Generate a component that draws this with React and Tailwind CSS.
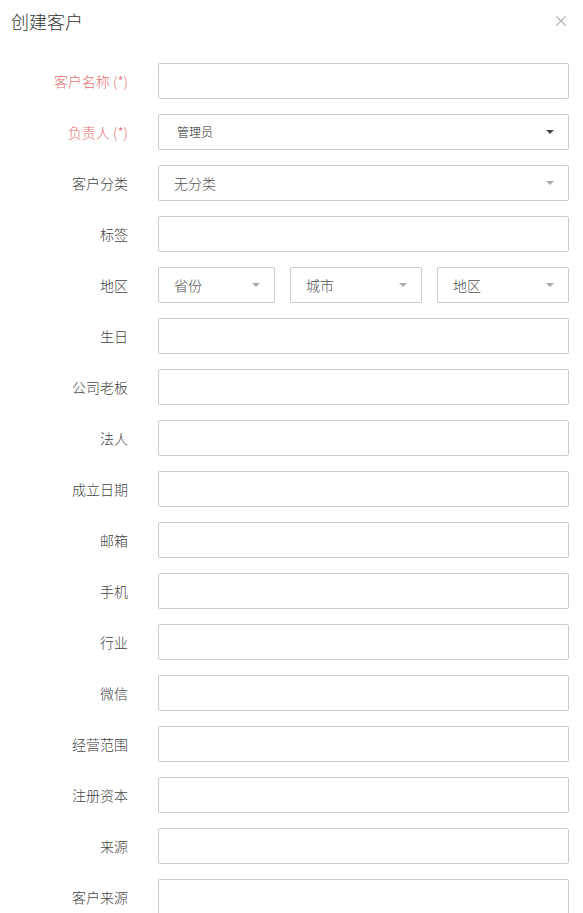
import React from 'react'

const font = { fontFamily: '"Noto Sans CJK SC", "Noto Sans", sans-serif' }

const Caret = ({ dark }) => (
    <svg width="8" height="4" viewBox="0 0 8 4" className="shrink-0">
        <path d="M0 0h8L4 4z" fill={dark ? '#444' : '#aaa'} />
    </svg>
)

const Select = ({ value, small, dark, className = '' }) => (
    <div className={`flex h-[36px] items-center justify-between rounded-[2px] border border-[#cccccc] bg-white pl-[15px] pr-[14px] ${className}`}>
        <span className={small ? 'pl-[3px] text-[12px] font-light text-[#222]' : 'text-[14px] font-light text-[#555]'}>{value}</span>
        <Caret dark={dark} />
    </div>
)

const Input = () => (
    <div className="h-[36px] flex-1 rounded-[2px] border border-[#cccccc] bg-white" />
)

const Row = ({ label, required, children }) => (
    <div className="flex items-center gap-[30px]">
        <label className={`w-[128px] shrink-0 text-right text-[14px] font-light ${required ? 'text-[#e36f6f]' : 'text-[#444]'}`}>
            {label}
        </label>
        <div className="flex flex-1 gap-[15px]">{children}</div>
    </div>
)

const plain = ['标签']
const rest = ['生日', '公司老板', '法人', '成立日期', '邮箱', '手机', '行业', '微信', '经营范围', '注册资本', '来源', '客户来源']

export default function App() {
    return (
        <div className="h-[913px] w-[583px] overflow-hidden bg-white pl-[11px] pr-[14px]" style={font}>
            <div className="flex items-center justify-between pt-[9px]">
                <h1 className="text-[18px] font-light leading-[24px] text-[#333]">创建客户</h1>
                <svg width="10" height="10" viewBox="0 0 10 10" className="mr-[3px]">
                    <path d="M0.5 0.5l9 9M9.5 0.5l-9 9" stroke="#b5b5b5" strokeWidth="1.3" />
                </svg>
            </div>

            <form className="ml-[-11px] mt-[30px] flex flex-col gap-[15px]">
                <Row label="客户名称 (*)" required><Input /></Row>
                <Row label="负责人 (*)" required><Select value="管理员" small dark className="flex-1" /></Row>
                <Row label="客户分类"><Select value="无分类" className="flex-1" /></Row>
                {plain.map((l) => <Row key={l} label={l}><Input /></Row>)}
                <Row label="地区">
                    <Select value="省份" className="w-[117px] shrink-0" />
                    <Select value="城市" className="flex-1" />
                    <Select value="地区" className="flex-1" />
                </Row>
                {rest.map((l) => <Row key={l} label={l}><Input /></Row>)}
            </form>
        </div>
    )
}
